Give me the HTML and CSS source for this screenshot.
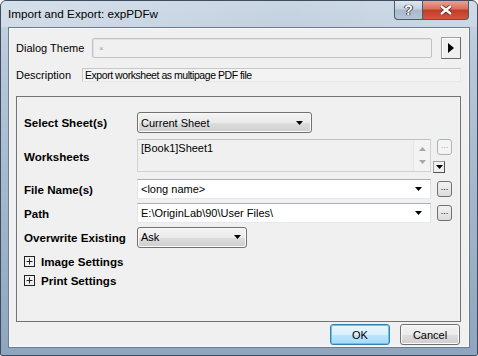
FILE: index.html
```html
<!DOCTYPE html>
<html lang="en">
<head>
    <meta charset="UTF-8">
    <title>Import and Export: expPDFw</title>
    <link rel="stylesheet" href="styles.css">
</head>
<body>
    <div class="window">
        <div class="titlebar">
            <span class="title">Import and Export: expPDFw</span>
            <div class="caption-buttons">
                <div class="cap-btn help">?</div>
                <div class="cap-btn close">
                    <svg width="14" height="10" viewBox="0 0 14 10">
                        <path d="M2 1 L12 9 M12 1 L2 9" stroke="#5a2020" stroke-width="4"/>
                        <path d="M2 1 L12 9 M12 1 L2 9" stroke="#fff" stroke-width="2.4"/>
                    </svg>
                </div>
            </div>
        </div>

        <div class="client">
            <div class="theme-row">
                <span class="theme-label">Dialog Theme</span>
                <div class="theme-box"><span class="theme-x">×</span></div>
                <div class="arrow-btn">
                    <svg width="6" height="10" viewBox="0 0 6 10"><path d="M0 0 L6 5 L0 10 Z" fill="#000"/></svg>
                </div>
            </div>

            <div class="desc-row">
                <span class="desc-label">Description</span>
                <div class="desc-box">Export worksheet as multipage PDF file</div>
            </div>

            <div class="group">
                <div class="row first">
                    <span class="label">Select Sheet(s)</span>
                    <div class="combo btn-combo sheet-combo">
                        <span>Current Sheet</span>
                        <svg class="drop" width="7" height="4" viewBox="0 0 7 4"><path d="M0 0 H7 L3.5 4 Z" fill="#000"/></svg>
                    </div>
                </div>

                <div class="row worksheets">
                    <span class="label">Worksheets</span>
                    <div class="listbox">
                        <span class="list-text">[Book1]Sheet1</span>
                        <div class="list-scroll">
                            <svg width="7" height="4" viewBox="0 0 7 4"><path d="M0 4 H7 L3.5 0 Z" fill="#a8a8a8"/></svg>
                            <svg width="7" height="4" viewBox="0 0 7 4"><path d="M0 0 H7 L3.5 4 Z" fill="#a8a8a8"/></svg>
                        </div>
                    </div>
                    <div class="side">
                        <div class="dots disabled">...</div>
                        <div class="mini-drop">
                            <svg width="7" height="4" viewBox="0 0 7 4"><path d="M0 0 H7 L3.5 4 Z" fill="#000"/></svg>
                        </div>
                    </div>
                </div>

                <div class="row">
                    <span class="label">File Name(s)</span>
                    <div class="combo edit-combo">
                        <span>&lt;long name&gt;</span>
                        <svg class="drop" width="7" height="4" viewBox="0 0 7 4"><path d="M0 0 H7 L3.5 4 Z" fill="#000"/></svg>
                    </div>
                    <div class="dots">...</div>
                </div>

                <div class="row">
                    <span class="label">Path</span>
                    <div class="combo edit-combo">
                        <span>E:\OriginLab\90\User Files\</span>
                        <svg class="drop" width="7" height="4" viewBox="0 0 7 4"><path d="M0 0 H7 L3.5 4 Z" fill="#000"/></svg>
                    </div>
                    <div class="dots">...</div>
                </div>

                <div class="row">
                    <span class="label">Overwrite Existing</span>
                    <div class="combo btn-combo ask-combo">
                        <span>Ask</span>
                        <svg class="drop" width="7" height="4" viewBox="0 0 7 4"><path d="M0 0 H7 L3.5 4 Z" fill="#000"/></svg>
                    </div>
                </div>

                <div class="expander first-exp">
                    <svg width="11" height="11" viewBox="0 0 11 11">
                        <rect x="0.5" y="0.5" width="10" height="10" fill="none" stroke="#222"/>
                        <path d="M2.5 5.5 H8.5 M5.5 2.5 V8.5" stroke="#222"/>
                    </svg>
                    <span>Image Settings</span>
                </div>
                <div class="expander">
                    <svg width="11" height="11" viewBox="0 0 11 11">
                        <rect x="0.5" y="0.5" width="10" height="10" fill="none" stroke="#222"/>
                        <path d="M2.5 5.5 H8.5 M5.5 2.5 V8.5" stroke="#222"/>
                    </svg>
                    <span>Print Settings</span>
                </div>
            </div>

            <div class="buttons">
                <button class="push default">OK</button>
                <button class="push">Cancel</button>
            </div>
        </div>
    </div>
</body>
</html>
```

FILE: styles.css
```css
body {
    margin: 0;
    padding: 0;
    width: 478px;
    height: 356px;
    overflow: hidden;
    background: #fff;
    font-family: "Liberation Sans", Arial, sans-serif;
    font-size: 11px;
    color: #000;
}

.window {
    box-sizing: border-box;
    width: 478px;
    height: 356px;
    border: 1px solid #3d4c5e;
    border-radius: 6px 6px 2px 2px;
    background: linear-gradient(to bottom, #c9d6e4 0px, #b8c8da 60px, #a3b6cb 200px, #8fa5be 356px);
    display: flex;
    flex-direction: column;
}

.titlebar {
    height: 26px;
    display: flex;
    align-items: flex-start;
    padding-left: 7px;
    background: linear-gradient(to right, rgba(255,255,255,0.25), rgba(255,255,255,0) 60%, rgba(255,255,255,0.15));
    border-radius: 5px 5px 0 0;
}

.title {
    font-size: 11.7px;
    margin-top: 6px;
    color: #000;
}

.caption-buttons {
    margin-left: auto;
    margin-right: 8px;
    display: flex;
}

.cap-btn {
    height: 18px;
    border: 1px solid #4b5b6e;
    border-top: none;
    display: flex;
    align-items: center;
    justify-content: center;
}

.help {
    width: 27px;
    border-right: none;
    border-radius: 0 0 0 4px;
    background: linear-gradient(to bottom, #dfe6ee 0%, #c5d1de 45%, #a9b9cb 50%, #b6c5d6 100%);
    color: #fff;
    font-weight: bold;
    font-size: 14px;
    text-shadow: 0 0 1px #333, 0 0 1px #333, 1px 0 0 #444, -1px 0 0 #444;
}

.close {
    width: 45px;
    border-radius: 0 0 4px 0;
    background: linear-gradient(to bottom, #e8a293 0%, #d5705f 45%, #c23b24 50%, #d4553f 100%);
}

.client {
    flex: 1;
    margin: 0 7px 7px 7px;
    background: #f0f0f0;
    border: 1px solid #6a7c92;
    box-shadow: inset 0 0 0 1px #f8f8f8;
    display: flex;
    flex-direction: column;
    padding: 9px 8px 0 7px;
}

.theme-row {
    display: flex;
    align-items: center;
    height: 22px;
}

.theme-label {
    width: 76px;
}

.theme-box {
    width: 338px;
    height: 18px;
    border: 1px solid #c2c2c2;
    border-radius: 2px;
    background: #f0f0f0;
    box-shadow: inset 1px 1px 0 #e2e2e2;
    display: flex;
    align-items: center;
}

.theme-x {
    color: #9a9a9a;
    font-size: 8px;
    margin-left: 6px;
}

.arrow-btn {
    margin-left: 9px;
    width: 18px;
    height: 20px;
    border: 1px solid #a0a0a0;
    border-right-color: #696969;
    border-bottom-color: #696969;
    background: #f0f0f0;
    box-shadow: inset 1px 1px 0 #fff;
    display: flex;
    align-items: center;
    justify-content: center;
}

.desc-row {
    display: flex;
    align-items: center;
    margin-top: 9px;
    height: 14px;
}

.desc-label {
    width: 66px;
}

.desc-box {
    flex: 1;
    height: 12px;
    line-height: 12px;
    border: 1px solid #c8c8c8;
    border-right-color: #e8e8e8;
    border-bottom-color: #e8e8e8;
    background: #f3f3f3;
    padding-left: 2px;
    font-size: 10.5px;
    letter-spacing: -0.45px;
}

.group {
    margin-top: 14px;
    height: 209px;
    border: 1px solid #737373;
    padding: 15px 0 0 7px;
    display: flex;
    flex-direction: column;
}

.row {
    display: flex;
    align-items: center;
    margin-top: 4px;
    height: 20px;
}

.row.first {
    margin-top: 0;
    height: 21px;
}

.label {
    width: 113px;
    font-weight: bold;
    font-size: 11.6px;
    flex-shrink: 0;
}

.combo {
    box-sizing: border-box;
    height: 20px;
    display: flex;
    align-items: center;
    padding: 0 8px 0 3px;
}

.combo .drop {
    margin-left: auto;
}

.btn-combo {
    height: 21px;
    border: 1px solid #707070;
    border-radius: 3px;
    background: linear-gradient(to bottom, #f2f2f2 0%, #ebebeb 50%, #dddddd 51%, #cfcfcf 100%);
    box-shadow: inset 0 0 0 1px #fbfbfb;
}

.sheet-combo {
    width: 175px;
}

.ask-combo {
    width: 110px;
    padding-right: 5px;
}

.edit-combo {
    width: 294px;
    border: 1px solid #abadb3;
    border-right-color: #dbdfe6;
    border-bottom-color: #e3e9ef;
    border-left-color: #e2e3ea;
    background: #fff;
}

.dots {
    box-sizing: border-box;
    margin-left: 6px;
    width: 15px;
    height: 16px;
    border: 1px solid #707070;
    border-radius: 3px;
    background: linear-gradient(to bottom, #f2f2f2, #dcdcdc);
    font-size: 9px;
    line-height: 10px;
    text-align: center;
    color: #000;
}

.dots.disabled {
    border-color: #adb2b5;
    background: #f4f4f4;
    color: #a0a0a0;
    margin-left: 4px;
}

.row.worksheets {
    margin-top: 6px;
    height: 36px;
    align-items: flex-start;
}

.row.worksheets .label {
    margin-top: 11px;
}

.listbox {
    box-sizing: border-box;
    width: 294px;
    height: 33px;
    border: 1px solid #d2d2d2;
    border-top-color: #c0c0c0;
    background: #f0f0f0;
    display: flex;
}

.list-text {
    padding: 2px 0 0 3px;
}

.list-scroll {
    margin-left: auto;
    width: 16px;
    border-left: 1px solid #e6e6e6;
    background: #f3f3f3;
    display: flex;
    flex-direction: column;
    align-items: center;
    justify-content: space-around;
    padding: 3px 0;
}

.side {
    display: flex;
    flex-direction: column;
    margin-left: 2px;
}

.mini-drop {
    box-sizing: border-box;
    margin-top: 6px;
    width: 12px;
    height: 12px;
    border: 1px solid #a0a0a0;
    border-right-color: #505050;
    border-bottom-color: #505050;
    background: #f0f0f0;
    display: flex;
    align-items: center;
    justify-content: center;
}

.expander {
    display: flex;
    align-items: center;
    gap: 6px;
    height: 14px;
    margin-top: 5px;
    font-weight: bold;
    font-size: 11.6px;
}

.expander.first-exp {
    margin-top: 7px;
}

.buttons {
    display: flex;
    justify-content: flex-end;
    gap: 10px;
    margin-top: auto;
    margin-bottom: 2px;
    padding-right: 1px;
}

.push {
    box-sizing: border-box;
    width: 60px;
    height: 21px;
    margin: 0;
    padding: 0;
    font-family: "Liberation Sans", Arial, sans-serif;
    font-size: 11px;
    color: #000;
    border: 1px solid #707070;
    border-radius: 3px;
    background: linear-gradient(to bottom, #f2f2f2 0%, #ebebeb 50%, #dddddd 51%, #cfcfcf 100%);
    box-shadow: inset 0 0 0 1px #fbfbfb;
}

.push.default {
    border-color: #3c7fb1;
    box-shadow: inset 0 0 0 1px #5ec4f0;
    background: linear-gradient(to bottom, #eaf6fd 0%, #d9f0fc 50%, #bee6fd 51%, #a7d9f5 100%);
}
```
